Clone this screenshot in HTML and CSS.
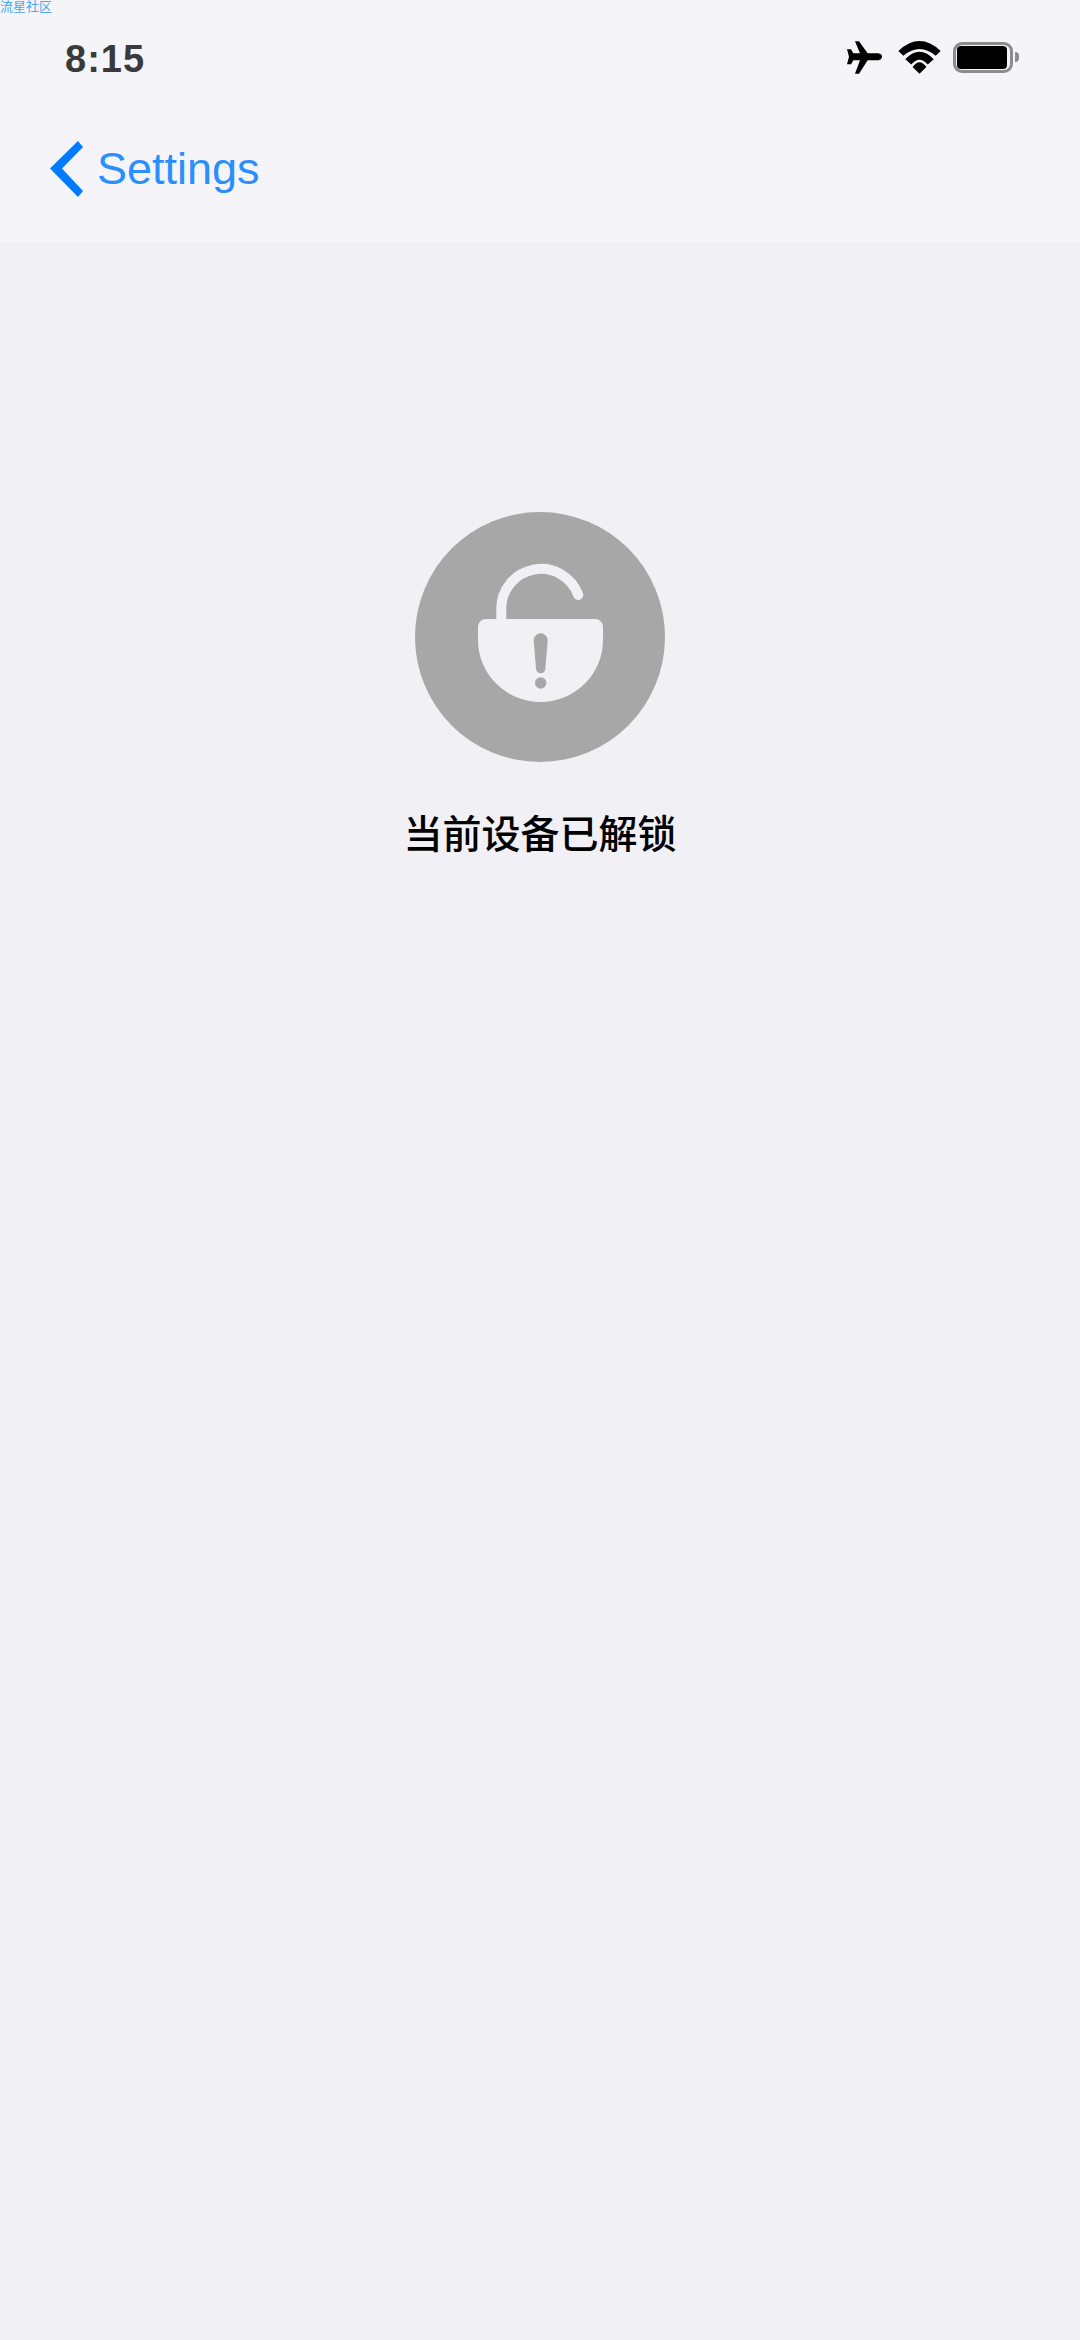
FILE: index.html
```html
<!DOCTYPE html>
<html>
<head>
    <title>Settings</title>
    <link rel="stylesheet" href="styles.css">
</head>
<body>
    <div class="watermark">流星社区</div>
    <div class="header">
        <div class="status-bar">
            <div class="time">8:15</div>
            <div class="status-icons">
                <svg class="icon-plane" viewBox="78 60 108 99">
                    <path d="M186 107c0-7-8-10-14-10H143L117 61H105L120 97H100L93 85H81L87 107 81 130H93L100 118H120L105 158H117L143 118H172c6 0 14-4 14-11z"/>
                </svg>
                <svg class="icon-wifi" viewBox="232 58 130 100">
                    <path d="M233 88Q297 28 361 88L346 103Q297 62 248 103z"/>
                    <path d="M254 113Q297 68 340 113L322 129Q297 100 272 129z"/>
                    <path d="M276 137Q297 108 318 137L297 157z"/>
                </svg>
                <div class="battery">
                    <div class="battery-body"><div class="battery-level"></div></div>
                    <div class="battery-nub"></div>
                </div>
            </div>
        </div>
        <div class="nav-bar">
            <svg class="icon-back" viewBox="0 0 33 56">
                <path d="M28 0L33 6 12 27.500 33 50 28 56 0 27.500z"/>
            </svg>
            <span class="nav-title">Settings</span>
        </div>
    </div>
    <div class="content">
        <svg class="lock-badge" viewBox="0 0 250 250">
            <circle class="lock-bg" cx="125" cy="125" r="125"/>
            <path class="lock-shackle" d="M86.300 110V97.500A39.700 39.700 0 0 1 163.300 83"/>
            <path class="lock-body" d="M71 107H180a8 8 0 0 1 8 8V128a62.500 62 0 0 1-125 0V115a8 8 0 0 1 8-8z"/>
            <path class="lock-mark" d="M125.700 121.300a7 7 0 0 1 7 7.300l-2.300 28a4.700 4.700 0 0 1-9.400 0l-2.300-28a7 7 0 0 1 7-7.300z"/>
            <circle class="lock-mark" cx="125.700" cy="171" r="5.700"/>
        </svg>
        <div class="message">当前设备已解锁</div>
    </div>
</body>
</html>
```

FILE: styles.css
```css
body {
    margin: 0;
    height: 2340px;
    overflow: hidden;
    background: #f0f0f5;
    font-family: "Liberation Sans", "Noto Sans CJK SC", sans-serif;
    position: relative;
}
.watermark {
    position: absolute;
    top: 0;
    left: 0;
    font-family: "Noto Sans CJK SC", sans-serif;
    font-size: 13px;
    line-height: 12px;
    color: #4aa6f2;
}
.header {
    height: 244px;
    box-sizing: border-box;
    background: #f5f5f9;
    border-bottom: 1px solid #efeff3;
}
.status-bar {
    height: 114px;
    box-sizing: border-box;
    padding: 0 61px 0 65px;
    display: flex;
    justify-content: space-between;
    align-items: center;
}
.time {
    margin-top: 4px;
    font-size: 38px;
    font-weight: bold;
    letter-spacing: 1px;
    color: #3a3a3a;
}
.status-icons {
    display: flex;
    align-items: center;
}
.icon-plane {
    width: 36px;
    height: 33px;
    margin-right: 16px;
}
.icon-wifi {
    width: 43px;
    height: 33px;
    margin-right: 12px;
}
.battery {
    display: flex;
    align-items: center;
}
.battery-body {
    width: 60px;
    height: 31px;
    box-sizing: border-box;
    border: 3px solid #8c8c8c;
    border-radius: 9px;
    padding: 1px 3px 1px 1px;
}
.battery-level {
    height: 100%;
    background: #000;
    border-radius: 4px;
}
.battery-nub {
    width: 4px;
    height: 10px;
    margin-left: 2px;
    background: #8c8c8c;
    border-radius: 0 5px 5px 0;
}
.nav-bar {
    height: 110px;
    padding-left: 50px;
    display: flex;
    align-items: center;
}
.icon-back {
    width: 33px;
    height: 56px;
    margin-right: 14px;
}
.icon-back path {
    fill: #007aff;
}
.nav-title {
    font-size: 45px;
    color: #2a8ffc;
}
.content {
    display: flex;
    flex-direction: column;
    align-items: center;
    padding-top: 268px;
}
.lock-badge {
    width: 250px;
    height: 250px;
}
.lock-bg {
    fill: #a7a7a8;
}
.lock-shackle {
    fill: none;
    stroke: #f0f0f5;
    stroke-width: 10;
    stroke-linecap: round;
}
.lock-body {
    fill: #f0f0f5;
}
.lock-mark {
    fill: #a7a7a8;
}
.message {
    margin-top: 41px;
    font-family: "Noto Sans CJK SC", sans-serif;
    font-size: 39px;
    font-weight: 500;
    line-height: 56px;
    color: #000;
}
```
